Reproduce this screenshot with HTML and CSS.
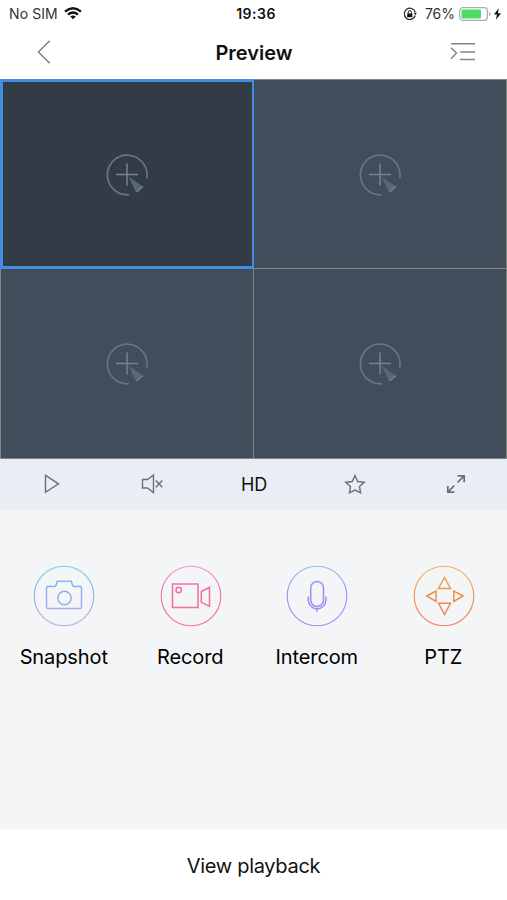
FILE: index.html
```html
<!DOCTYPE html>
<html lang="en">
<head>
<meta charset="utf-8">
<title>Preview</title>
<link rel="stylesheet" href="styles.css">
</head>
<body>
<svg class="defs" width="0" height="0">
  <defs>
    <linearGradient id="blue" gradientUnits="userSpaceOnUse" x1="0" y1="0" x2="0" y2="62"><stop offset="0" stop-color="#79cdf4"/><stop offset=".35" stop-color="#7fb5ee"/><stop offset="1" stop-color="#c5a5e8"/></linearGradient>
    <linearGradient id="pink" gradientUnits="userSpaceOnUse" x1="0" y1="0" x2="0" y2="62"><stop offset="0" stop-color="#f59bc4"/><stop offset=".35" stop-color="#f06ca8"/><stop offset="1" stop-color="#f77478"/></linearGradient>
    <linearGradient id="violet" gradientUnits="userSpaceOnUse" x1="0" y1="0" x2="0" y2="62"><stop offset="0" stop-color="#8fbdf8"/><stop offset=".4" stop-color="#a08cf5"/><stop offset="1" stop-color="#a98cf2"/></linearGradient>
    <linearGradient id="orange" gradientUnits="userSpaceOnUse" x1="0" y1="0" x2="0" y2="62"><stop offset="0" stop-color="#f8b35f"/><stop offset=".5" stop-color="#ec9048"/><stop offset="1" stop-color="#ee7e58"/></linearGradient>
    <symbol id="add" viewBox="0 0 44 44">
      <path d="M41.700 25.300A19.800 19.800 0 1 0 24 41.700" fill="none" stroke="#687581" stroke-width="1.700"/>
      <path d="M22 10.500v22M11 21.500h22" fill="none" stroke="#778390" stroke-width="1.500"/>
      <path d="M23.500 23.500l15 10.500-7.500 5.500z" fill="#596673"/>
      <path d="M38 33.500l-6.500 5.500" fill="none" stroke="#75818c" stroke-width="1.500"/>
    </symbol>
  </defs>
</svg>
<main class="screen">
  <header class="status">
    <div class="side">
      <span class="carrier">No SIM</span>
      <svg class="wifi" width="18" height="13" viewBox="0 0 18 13" fill="none" stroke="#111" stroke-width="2.400"><path d="M1 4.700Q9-2 17 4.700M4 7.700Q9 3.500 14 7.700"/><path d="M6.200 9.500Q9 7.300 11.800 9.500L9 12.300z" fill="#111" stroke="none"/></svg>
    </div>
    <span class="time">19:36</span>
    <div class="side right">
      <svg class="lock" width="14" height="14" viewBox="0 0 14 14"><path d="M12.300 8.500A5.600 5.600 0 1 1 12.300 5.200" fill="none" stroke="#222" stroke-width="1.200"/><path d="M10.600 5.700h3.300l-1.500 2.500z" fill="#222"/><path d="M4.200 6.500h5.200v3.700H4.200z" fill="#111"/><path d="M5.200 7V5.200q0-1.600 1.600-1.600t1.600 1.600V7" fill="none" stroke="#222"/></svg>
      <span class="percent">76%</span>
      <svg class="battery" width="32" height="14" viewBox="0 0 32 14"><rect x=".7" y=".7" width="27.600" height="12.600" rx="3" fill="none" stroke="#aaa" stroke-width="1.200"/><rect x="2.500" y="2.500" width="19.500" height="9" rx="1" fill="#4cd964"/><path d="M30 5q1.500.4 1.500 2T30 9z" fill="#aaa"/></svg>
      <svg class="bolt" width="7" height="12" viewBox="0 0 8 13"><path d="M5.400 0L0 7h3.400L2.200 13 8 5.500H4.500z" fill="#111"/></svg>
    </div>
  </header>
  <nav class="nav">
    <svg width="14" height="24" viewBox="0 0 14 24" fill="none" stroke="#777" stroke-width="1.300"><path d="M12.800 .7L1.300 12l11.500 11.300"/></svg>
    <h1 class="title">Preview</h1>
    <svg width="26" height="20" viewBox="0 0 26 20" fill="none" stroke="#85868a" stroke-width="1.500"><path d="M1 1.800h24M10 9.900h15M10 17.500h15M1 5.700l5.500 5.300L1 16.700"/></svg>
  </nav>
  <section class="cameras">
    <div class="cell selected"><svg width="44" height="44"><use href="#add"/></svg></div>
    <div class="cell"><svg width="44" height="44"><use href="#add"/></svg></div>
    <div class="cell"><svg width="44" height="44"><use href="#add"/></svg></div>
    <div class="cell"><svg width="44" height="44"><use href="#add"/></svg></div>
  </section>
  <section class="toolbar">
    <div class="tool"><svg width="20" height="22" viewBox="0 0 20 22"><path d="M4.500 2.300v17L17.500 10.800z"/></svg></div>
    <div class="tool"><svg width="24" height="22" viewBox="0 0 24 22"><path d="M2.500 6.500h5l6-4.500v17.500l-6-4.500h-5zM15.800 7.500l6.500 6.800M22.300 7.500l-6.500 6.800"/></svg></div>
    <div class="tool hd">HD</div>
    <div class="tool"><svg width="22" height="22" viewBox="0 0 22 22"><path d="M11 2.500l2.700 6 6.500.7-4.700 4.400 1.100 6.200L11 17l-5.600 2.800 1.100-6.200L1.800 9.200l6.500-.7z"/></svg></div>
    <div class="tool"><svg width="22" height="22" viewBox="0 0 22 22"><path d="M12.500 9.500l6.700-6.700M12.500 2.800h6.700v6.500M9.300 12.500l-6.500 6.700M2.800 13v6.200h6.500" stroke-width="1.700"/></svg></div>
  </section>
  <section class="actions">
    <div class="action">
      <svg width="62" height="62" viewBox="0 0 62 62" stroke="url(#blue)"><circle class="ring" cx="31" cy="31" r="29.800"/><path d="M14.500 21.500h6.800q1.500 0 2-2l1-3.300h14l1 3.300q.5 2 2 2h5.700q1.500 0 1.500 1.500v19q0 1.500-1.500 1.500H15q-1.500 0-1.500-1.500V23q0-1.500 1-1.500z"/><circle cx="31.500" cy="33" r="6.700"/></svg>
      <span class="label">Snapshot</span>
    </div>
    <div class="action">
      <svg width="62" height="62" viewBox="0 0 62 62" stroke="url(#pink)"><circle class="ring" cx="31" cy="31" r="29.800"/><path d="M12.500 19h25.500v23.500H12.500zM41.300 26.500l8.200-4.200v19l-8.200-4z"/><circle cx="18.700" cy="25" r="2.700"/></svg>
      <span class="label">Record</span>
    </div>
    <div class="action">
      <svg width="62" height="62" viewBox="0 0 62 62" stroke="url(#violet)"><circle class="ring" cx="31" cy="31" r="29.800"/><rect x="24.700" y="16.500" width="12.800" height="25" rx="6.400"/><path d="M22.300 31.500V35a8.800 8.800 0 0 0 17.600 0v-3.500M31 43.800v3"/></svg>
      <span class="label">Intercom</span>
    </div>
    <div class="action">
      <svg width="62" height="62" viewBox="0 0 62 62" stroke="url(#orange)"><circle class="ring" cx="31" cy="31" r="29.800"/><path d="M31.500 12.300l6 11.200h-12zM31.500 49.500l-6-11.200h12zM13.800 31l9.200-5v10.500zM50 31l-9.200-5v10.500z"/></svg>
      <span class="label">PTZ</span>
    </div>
  </section>
  <footer class="playback"><span>View playback</span></footer>
</main>
</body>
</html>
```
FILE: styles.css
```css
* { box-sizing: border-box; }
body { margin: 0; font-family: Inter, "Liberation Sans", sans-serif; color: #111; }
.defs { display: block; }
svg { flex: none; }
.screen { display: flex; flex-direction: column; width: 507px; height: 900px; background: #f3f5f7; }
.status { display: flex; align-items: center; height: 27px; background: #fff; padding: 0 6px 0 9px; font-size: 14px; }
.side { flex: 1; display: flex; align-items: center; color: #333; }
.carrier { letter-spacing: .1px; margin-right: 6px; }
.time { font-weight: 600; letter-spacing: .5px; margin-left: 2px; }
.right { justify-content: flex-end; }
.percent { margin: 0 4px 0 8px; }
.bolt { margin-left: 3px; }
.nav { display: flex; align-items: center; justify-content: space-between; height: 52px; padding: 0 31px 1px 37px; background: #fff; }
.nav svg { margin-bottom: 1px; }
.title { margin: 0 0 0 7px; font-size: 20px; font-weight: 600; }
.cameras { display: grid; grid-template-columns: 252px 252px; grid-template-rows: 188px 189px; gap: 1px; height: 380px; padding: 1px; background: #7d8784; }
.cell { display: flex; align-items: center; justify-content: center; padding-top: 1px; background: #414d5a; }
.selected { background: #323c47; border: solid #428fe2; border-width: 3px 2px 3px 3px; margin: -1px -1px -1px; padding-right: 2px; }
.toolbar { display: flex; align-items: center; height: 51px; padding-bottom: 1px; background: #e9edf4; }
.tool { flex: 1; display: flex; align-items: center; justify-content: center; }
.tool svg { fill: none; stroke: #6b6e73; stroke-width: 1.400; }
.hd { padding-left: 1px; font-size: 18px; letter-spacing: -.2px; }
.actions { display: grid; grid-template-columns: repeat(4, 126.500px); height: 319px; padding-top: 55px; }
.action { display: flex; flex-direction: column; align-items: center; gap: 18px; }
.action svg { fill: none; stroke-width: 1.500; margin-left: 2px; }
.action .ring { stroke-width: 1.100; }
.label { margin-left: 1px; font-size: 20px; line-height: 24px; letter-spacing: -.1px; color: #000; }
.playback { display: flex; align-items: center; justify-content: center; height: 71px; padding-top: 2px; background: #fff; font-size: 20px; letter-spacing: -.3px; }
```
